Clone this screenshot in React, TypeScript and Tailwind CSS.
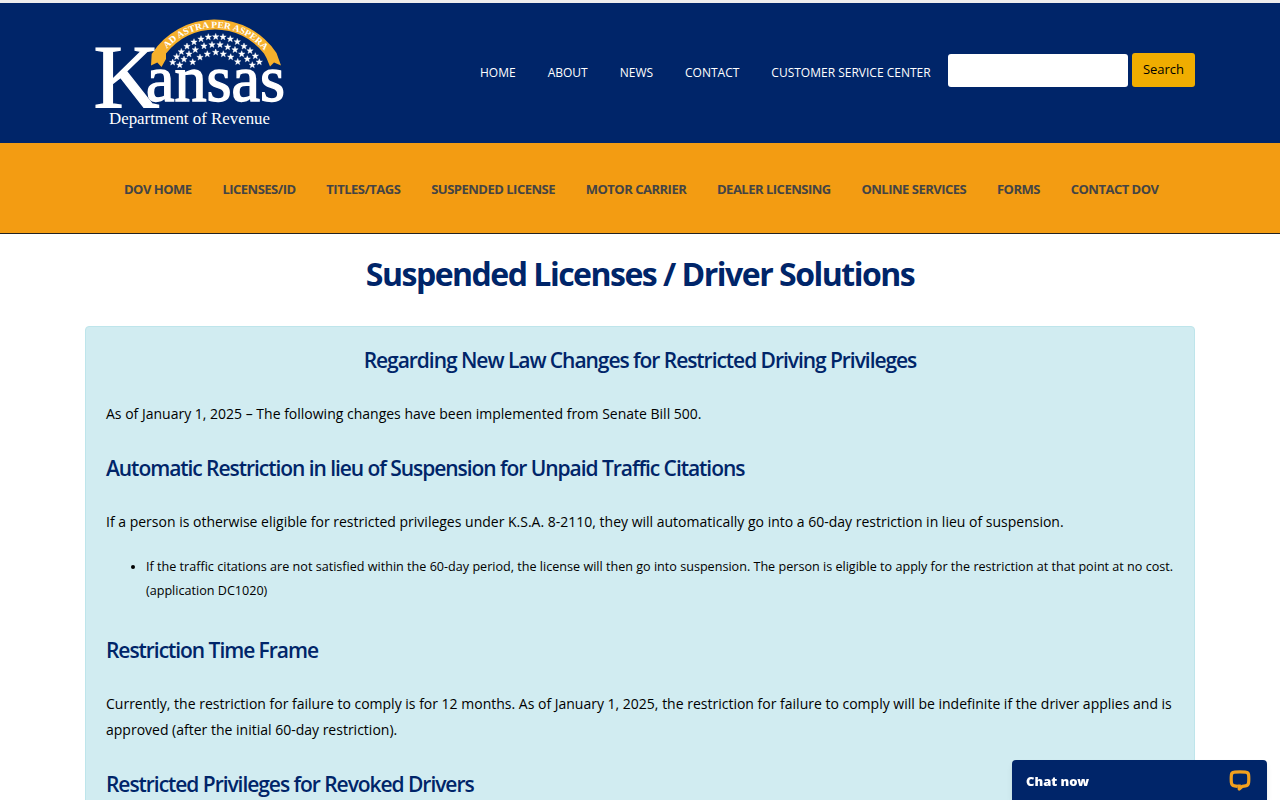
const topLinks = ["HOME", "ABOUT", "NEWS", "CONTACT", "CUSTOMER SERVICE CENTER"];

const mainLinks = [
  "DOV HOME",
  "LICENSES/ID",
  "TITLES/TAGS",
  "SUSPENDED LICENSE",
  "MOTOR CARRIER",
  "DEALER LICENSING",
  "ONLINE SERVICES",
  "FORMS",
  "CONTACT DOV",
];

const stars = [
  [87.7, 47.3], [91.7, 41.7], [96.3, 36.7], [102, 31.3], [109, 27], [116, 24], [123.3, 22], [130.7, 21.7],
  [138, 22], [145.3, 24], [152.3, 26.7], [159, 31.3], [165, 35.7], [170.3, 41], [174.3, 47],
  [94.7, 50], [99, 44.3], [104, 39], [110.3, 34.7], [119, 31], [127, 29.7], [135, 29.7],
  [142.7, 32], [150, 34.7], [156.7, 39], [162.3, 44], [167.3, 50],
  [107.7, 47], [115, 42.3], [122.3, 39], [130.7, 37.3], [138.3, 39], [145.7, 42], [152.7, 46.7],
];

function Logo() {
  return (
    <svg className="block h-[115px] w-[195px]" viewBox="10 0 195 115" role="img" aria-label="Kansas Department of Revenue">
      <defs>
        <path id="motto" d="M69.5 53 A65.3 65.3 0 0 1 190.1 53" />
      </defs>
      <path
        d="M66.7 39 A74.4 74.4 0 0 1 191.5 38 L196 50.5 L189 47.5 L185 51.5 L181.5 43 L179 38.5 A62 62 0 0 0 81 38.5 L81 44 L76.5 52 L72.3 47.5 L66 50.5 Z"
        fill="#f6b02c"
      />
      <text fill="#fff" fontFamily="Liberation Serif, serif" fontSize="9.2" fontWeight="700">
        <textPath href="#motto" startOffset="23" textLength="110" lengthAdjust="spacingAndGlyphs">AD ASTRA PER ASPERA</textPath>
      </text>
      {stars.map(([x, y]) => (
        <path
          key={`${x}-${y}`}
          transform={`translate(${x} ${y})`}
          d="M0-3.3 .9-1 3.2-1 1.4 .5 2 2.8 0 1.5-2 2.8-1.4 .5-3.2-1-.9-1Z"
          fill="#fff"
          stroke="#fff"
          strokeWidth=".4"
        />
      ))}
      <g fill="#fff" fontFamily="Liberation Serif, serif">
        <text x="8.5" y="93" fontSize="90" textLength="66" lengthAdjust="spacingAndGlyphs" stroke="#fff" strokeWidth="1.2">K</text>
        <text x="61" y="86.3" fontSize="66" textLength="139" lengthAdjust="spacingAndGlyphs" stroke="#fff" strokeWidth="1.4">ansas</text>
        <text x="24" y="109" fontSize="17" textLength="161" lengthAdjust="spacingAndGlyphs">Department of Revenue</text>
      </g>
    </svg>
  );
}

function Heading({ children, className = "" }: { children: string; className?: string }) {
  return (
    <h2 className={`text-[21px] leading-[27px] font-semibold tracking-[-0.05em] text-[#002569] ${className}`}>
      {children}
    </h2>
  );
}

function ChatIcon() {
  return (
    <svg className="mt-[2px] h-[22px] w-[22px]" viewBox="0 0 22 22" fill="none" stroke="#f2a01e" strokeWidth="3.2" strokeLinejoin="round">
      <path d="M8.5 16.3 5.5 15.9Q2.6 15.5 2.4 12.7 2 8.5 2.4 5 2.6 2.4 5.3 2.2 11 1.6 16.7 2.2 19.4 2.4 19.6 5 20 8.5 19.6 12.7 19.4 15.5 16.5 15.9L13.4 16.3 10.2 19V14.5" />
    </svg>
  );
}

export default function App() {
  return (
    <div className="h-[800px] overflow-hidden bg-white font-['Open_Sans',sans-serif] text-black">
      <header className="h-[143px] border-t-3 border-[#ededed] bg-[#002569]">
        <div className="mx-auto flex w-[1110px] pt-3">
          <div className="w-[395px] pl-[10px]">
            <Logo />
          </div>
          <nav className="flex flex-1 gap-[32px] pt-[48px] text-[12px] leading-[20px] text-white">
            {topLinks.map((label) => (
              <a key={label} href="#" className="whitespace-nowrap">{label}</a>
            ))}
          </nav>
          <form className="flex items-end gap-1 self-start pt-[38px]">
            <input aria-label="Search" className="h-[33px] w-[180px] rounded-[3px] bg-white" />
            <button type="button" className="h-[34px] w-[63px] rounded-[3px] bg-[#f0ad00] text-[13px]">Search</button>
          </form>
        </div>
      </header>

      <nav className="h-[91px] border-b border-[#222] bg-[#f39c12]">
        <div className="mx-auto flex w-[1110px] gap-[30.75px] pt-[36px] pl-[39px] text-[13px] leading-[20px] font-bold tracking-[-0.5px] text-[#444]">
          {mainLinks.map((label) => (
            <a key={label} href="#" className="whitespace-nowrap">{label}</a>
          ))}
        </div>
      </nav>

      <main className="mx-auto w-[1110px]">
        <h1 className="pt-[18px] text-center text-[32px] leading-[44px] font-bold tracking-[-1.5px] text-[#002569]">
          Suspended Licenses / Driver Solutions
        </h1>
        <section className="mt-[30px] rounded-[4px] border border-[#bee5eb] bg-[#d1ecf1] px-5 pt-5 pb-10 text-[14px] leading-[26px]">
          <Heading className="text-center">Regarding New Law Changes for Restricted Driving Privileges</Heading>
          <p className="mt-[27px]">As of January 1, 2025 – The following changes have been implemented from Senate Bill 500.</p>
          <Heading className="mt-[28px]">Automatic Restriction in lieu of Suspension for Unpaid Traffic Citations</Heading>
          <p className="mt-[27px]">
            If a person is otherwise eligible for restricted privileges under K.S.A. 8-2110, they will automatically go
            into a 60-day restriction in lieu of suspension.
          </p>
          <ul className="mt-[20px] list-disc pl-10 text-[12.6px] leading-[24px]">
            <li>
              If the traffic citations are not satisfied within the 60-day period, the license will then go into
              suspension. The person is eligible to apply for the restriction at that point at no cost.
              <br />
              (application DC1020)
            </li>
          </ul>
          <Heading className="mt-[34px]">Restriction Time Frame</Heading>
          <p className="mt-[27px]">
            Currently, the restriction for failure to comply is for 12 months. As of January 1, 2025, the restriction
            for failure to comply will be indefinite if the driver applies and is approved (after the initial 60-day
            restriction).
          </p>
          <Heading className="mt-[28px]">Restricted Privileges for Revoked Drivers</Heading>
        </section>
      </main>

      <button
        type="button"
        className="fixed right-[13px] bottom-0 flex h-[40px] w-[255px] items-center justify-between rounded-t-[4px] bg-[#002569] pr-4 pl-[14px] font-['Noto_Sans',sans-serif] text-[13px] font-black text-white shadow-md"
      >
        <span className="pt-[3px]">Chat now</span>
        <ChatIcon />
      </button>
    </div>
  );
}
